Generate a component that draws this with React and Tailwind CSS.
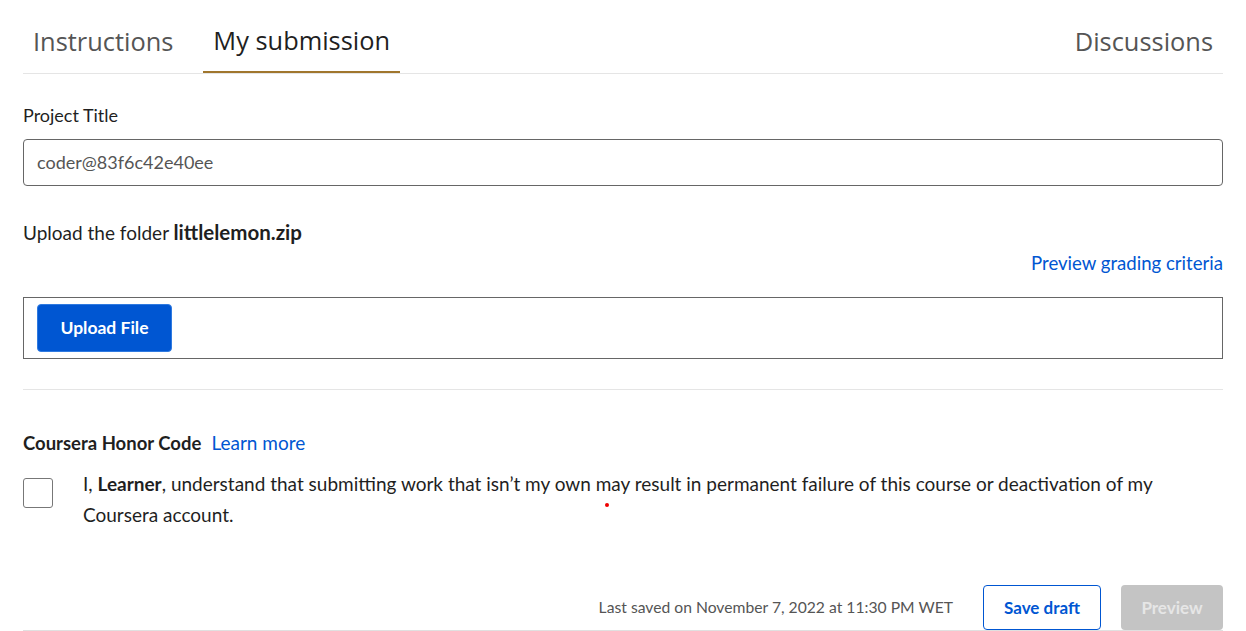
import React from 'react';

const SANS = "font-['Lato','Noto_Sans',sans-serif]";

const Tabs = () => (
  <div className="flex items-end border-b border-[#e5e5e5] h-[74px]">
    <div className="flex font-['Open_Sans',sans-serif] text-[25.4px] leading-none">
      <button className="px-[10px] h-[74px] pt-[11px] text-[#555] flex items-center">Instructions</button>
      <button className="ml-[20px] px-[10px] h-[74px] pt-[11px] text-[#1f1f1f] flex items-center border-b-2 border-[#a0762d] -mb-px">
        My submission
      </button>
    </div>
    <div className="ml-auto font-['Open_Sans',sans-serif] text-[25.4px] leading-none h-[74px] flex items-center pt-[11px] pr-[10px] text-[#555]">
      Discussions
    </div>
  </div>
);

export default function App() {
  return (
    <div className={`${SANS} bg-white w-[1246px] h-[631px] overflow-hidden relative`}>
      <div className="mx-[23px]">
        <Tabs />

        <div className="pt-[28px] text-[18px] leading-[26px] text-[#1f1f1f]">Project Title</div>
        <div className="mt-[11px] h-[47px] border border-[#666] rounded-[4px] flex items-center px-[13px] text-[18px] text-[#555]">
          coder@83f6c42e40ee
        </div>

        <div className="mt-[33px] text-[19px] leading-[26px] text-[#1f1f1f]">
          Upload the folder <b className="font-bold text-[20.5px]">littlelemon.zip</b>
        </div>
        <div className="flex justify-end mt-[4px]">
          <a className="text-[18.6px] leading-[26px] text-[#0056d2]">Preview grading criteria</a>
        </div>
        <div className="mt-[21px] h-[62px] border border-[#666] flex items-center px-[13px]">
          <button className="h-[48px] w-[135px] rounded-[4px] bg-[#0056d2] border border-[#2f7ae0] text-white font-bold text-[17.5px]">
            Upload File
          </button>
        </div>

        <div className="mt-[30px] border-t border-[#e5e5e5]" />

        <div className="mt-[41px] flex items-center gap-[10px] leading-[24px]">
          <span className="font-bold text-[18.5px] text-[#1f1f1f]">Coursera Honor Code</span>
          <a className="text-[#0056d2] text-[19px]">Learn more</a>
        </div>
        <div className="mt-[13px] flex items-start">
          <div className="w-[30px] h-[30px] mt-[10px] border border-[#777] rounded-[3px] shrink-0" />
          <p className="ml-[30px] text-[19px] leading-[31px] text-[#1f1f1f]">
            I, <b className="font-bold">Learner</b>, understand that submitting work that isn’t my own may result in permanent failure of this course or deactivation of my Coursera account.
          </p>
        </div>

        <div className="mt-[55px] flex items-center justify-end border-b border-[#e0e0e0]">
          <span className="text-[15.7px] text-[#555] mr-[30px]">Last saved on November 7, 2022 at 11:30 PM WET</span>
          <button className="h-[45px] w-[118px] rounded-[4px] border border-[#0056d2] text-[#0056d2] font-bold text-[17px] mr-[20px]">
            Save draft
          </button>
          <button className="h-[45px] w-[102px] rounded-[4px] bg-[#c4c4c4] text-[#e6e6e6] font-bold text-[17px]">
            Preview
          </button>
        </div>
      </div>
      <span className="absolute left-[605px] top-[503px] w-[4px] h-[4px] rounded-full bg-[#e00]" />
    </div>
  );
}
